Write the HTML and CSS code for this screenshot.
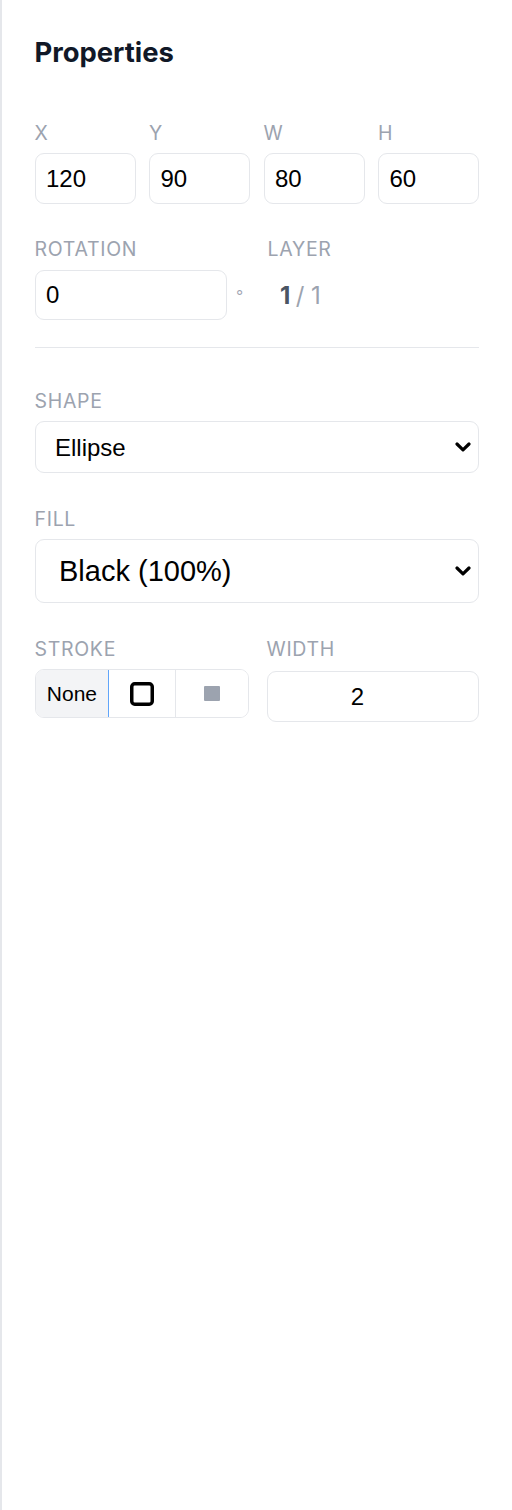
FILE: index.html
```html
<!DOCTYPE html>
<html lang="en">
<head>
<meta charset="utf-8">
<title>Properties</title>
<link rel="stylesheet" href="styles.css">
</head>
<body>
<aside class="panel">
  <h2 class="title">Properties</h2>

  <div class="grid4">
    <label class="field"><span class="label">X</span><input class="input" type="text" value="120"></label>
    <label class="field"><span class="label">Y</span><input class="input" type="text" value="90"></label>
    <label class="field"><span class="label">W</span><input class="input" type="text" value="80"></label>
    <label class="field"><span class="label">H</span><input class="input" type="text" value="60"></label>
  </div>

  <div class="row-rot">
    <div class="field rot">
      <span class="label">ROTATION</span>
      <div class="rot-line">
        <input class="input rot-input" type="text" value="0">
        <span class="deg">°</span>
      </div>
    </div>
    <div class="field layer">
      <span class="label">LAYER</span>
      <div class="layer-value"><b>1</b><span class="slash">/</span>1</div>
    </div>
  </div>

  <hr class="divider">

  <div class="field group">
    <span class="label">SHAPE</span>
    <div class="select-wrap">
      <select class="select shape-select">
        <option>Ellipse</option>
        <option>Rectangle</option>
      </select>
      <svg class="chev" viewBox="0 0 16 10" aria-hidden="true"><path d="M2 2 L8 7.8 L14 2" fill="none" stroke="#000" stroke-width="3.2" stroke-linecap="round" stroke-linejoin="round"/></svg>
    </div>
  </div>

  <div class="field group">
    <span class="label">FILL</span>
    <div class="select-wrap">
      <select class="select fill-select">
        <option>Black (100%)</option>
        <option>None</option>
      </select>
      <svg class="chev" viewBox="0 0 16 10" aria-hidden="true"><path d="M2 2 L8 7.8 L14 2" fill="none" stroke="#000" stroke-width="3.2" stroke-linecap="round" stroke-linejoin="round"/></svg>
    </div>
  </div>

  <div class="row2">
    <div class="field">
      <span class="label">STROKE</span>
      <div class="seg">
        <button class="seg-btn seg-none" type="button">None</button>
        <button class="seg-btn seg-outline" type="button" aria-label="Outline">
          <svg width="24" height="24" viewBox="0 0 24 24" aria-hidden="true"><rect x="1.75" y="1.75" width="20.5" height="20.5" rx="3" fill="none" stroke="#000" stroke-width="3.5"/></svg>
        </button>
        <button class="seg-btn seg-fill" type="button" aria-label="Filled"><span class="fill-sq"></span></button>
      </div>
    </div>
    <div class="field">
      <span class="label">WIDTH</span>
      <input class="input width-input" type="text" value="2">
    </div>
  </div>
</aside>
</body>
</html>
```
FILE: styles.css
```css
* {
  box-sizing: border-box;
}

html,
body {
  margin: 0;
  background: #ffffff;
}

body {
  font-family: Inter, "Liberation Sans", sans-serif;
}

.panel {
  min-height: 1510px;
  border-left: 2px solid #e5e7eb;
  padding: 35.5px 33px 0 32.5px;
  display: flex;
  flex-direction: column;
}

.title {
  margin: 0 0 53.3px;
  font-family: Inter, sans-serif;
  font-weight: 700;
  font-size: 27.4px;
  line-height: 33px;
  color: #111827;
}

.field {
  display: flex;
  flex-direction: column;
  min-width: 0;
}

.label {
  font-family: Inter, sans-serif;
  font-size: 19.5px;
  line-height: 22px;
  letter-spacing: 0.7px;
  color: #9ca3af;
  margin-bottom: 9.5px;
}

.input {
  display: block;
  width: 100%;
  height: 50.5px;
  margin: 0;
  border: 1.5px solid #e5e7eb;
  border-radius: 9px;
  padding: 0 10.5px;
  font-family: "Liberation Sans", Arial, sans-serif;
  font-size: 24px;
  color: #000000;
  background: #ffffff;
  outline: none;
}

.grid4 {
  display: grid;
  grid-template-columns: repeat(4, 1fr);
  gap: 13.5px;
  margin-bottom: 34.5px;
}

.row-rot {
  display: flex;
}

.rot {
  flex: 0 0 233px;
}

.rot-line {
  display: flex;
  align-items: center;
}

.rot-input {
  width: 192.5px;
  flex: none;
}

.deg {
  margin-left: 9px;
  margin-top: 3.5px;
  font-family: "Liberation Sans", Arial, sans-serif;
  font-size: 18px;
  line-height: 18px;
  color: #9ca3af;
}

.layer {
  flex: 1;
}

.layer-value {
  height: 50.5px;
  display: flex;
  align-items: center;
  padding-left: 12.5px;
  font-family: Inter, sans-serif;
  font-size: 24px;
  color: #9ca3af;
}

.layer-value b {
  font-weight: 700;
  color: #4b5563;
}

.slash {
  margin: 0 6.5px 0 5.5px;
}

.divider {
  border: 0;
  height: 1.5px;
  background: #e5e7eb;
  margin: 26.5px 0 41.5px;
}

.group {
  margin-bottom: 34.5px;
}

.select-wrap {
  position: relative;
}

.select {
  display: block;
  width: 100%;
  margin: 0;
  appearance: none;
  -webkit-appearance: none;
  border: 1.5px solid #e5e7eb;
  border-radius: 9px;
  background: #ffffff;
  color: #000000;
  font-family: "Liberation Sans", Arial, sans-serif;
  outline: none;
}

.shape-select {
  height: 52px;
  font-size: 24px;
  padding: 0 40px 0 19.5px;
}

.fill-select {
  height: 64px;
  font-size: 29px;
  padding: 0 40px 0 23.5px;
}

.chev {
  position: absolute;
  right: 8.5px;
  top: 50%;
  width: 16px;
  height: 10px;
  transform: translateY(-50%);
  pointer-events: none;
}

.row2 {
  display: grid;
  grid-template-columns: 214.5px 1fr;
  gap: 17.5px;
  align-items: start;
}

.seg {
  display: flex;
  height: 48.5px;
  border: 1.5px solid #e5e7eb;
  border-radius: 9px;
  overflow: hidden;
  background: #ffffff;
}

.seg-btn {
  display: flex;
  align-items: center;
  justify-content: center;
  margin: 0;
  padding: 0;
  border: 0;
  border-right: 1.5px solid #e5e7eb;
  background: #ffffff;
  font-family: "Liberation Sans", Arial, sans-serif;
  font-size: 21px;
  color: #000000;
}

.seg-none {
  flex: 0 0 73.8px;
  background: #f3f4f6;
  border-right-color: #60a5fa;
}

.seg-outline {
  flex: 0 0 67px;
}

.seg-fill {
  flex: 1;
  border-right: 0;
}

.fill-sq {
  display: block;
  width: 16px;
  height: 15px;
  background: #9ca3af;
  border-radius: 1px;
}

.width-input {
  margin-top: 2px;
  padding: 0 41px 0 10.5px;
  text-align: center;
}
```
